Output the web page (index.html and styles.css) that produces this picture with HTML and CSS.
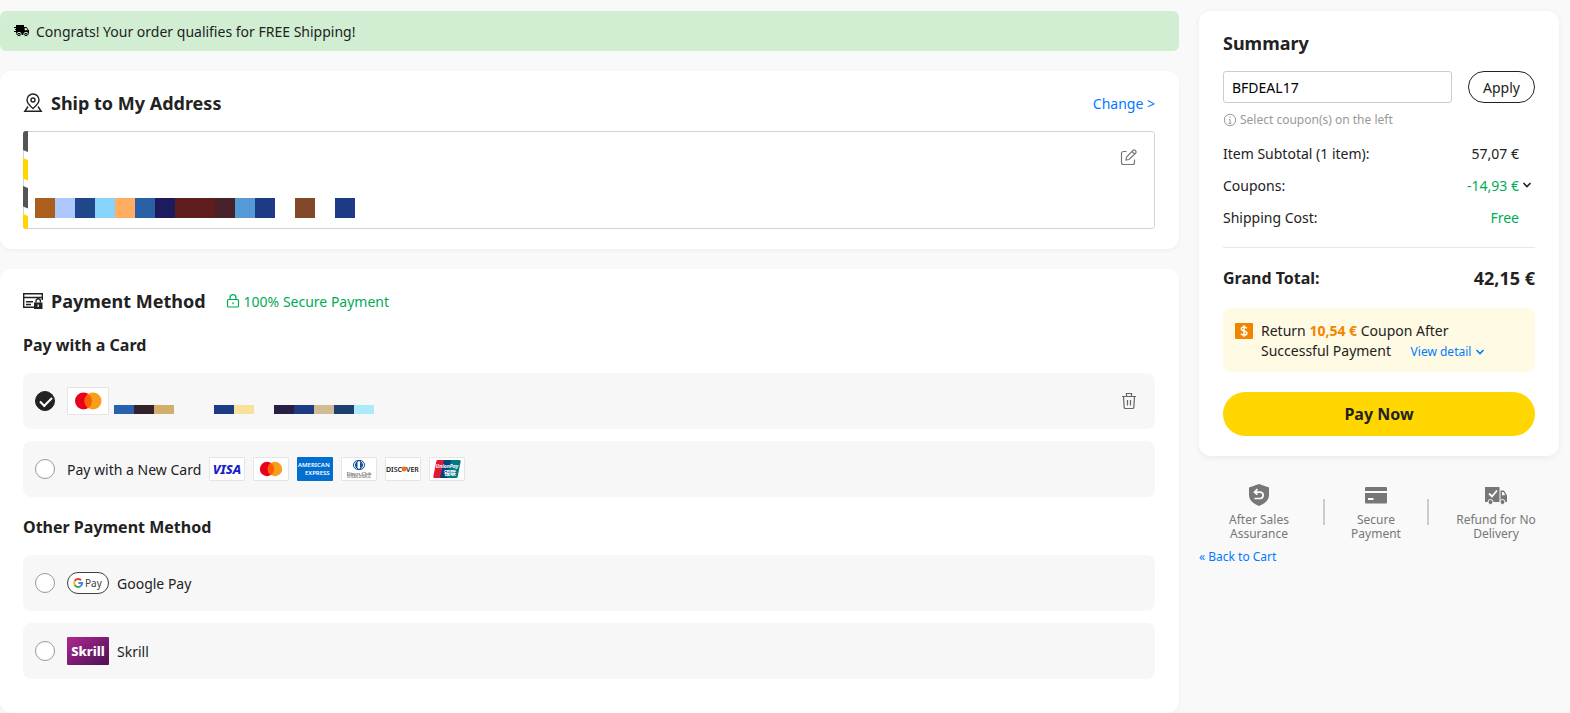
FILE: index.html
```html
<!DOCTYPE html>
<html lang="en">

<head>
    <meta charset="UTF-8">
    <meta name="viewport" content="width=device-width, initial-scale=1.0">
    <title>Checkout</title>
    <link rel="stylesheet" href="styles.css">
</head>

<body>
    <div class="checkout">
        <main class="main">
            <div class="banner">
                <svg width="16" height="14" viewBox="0 0 16 14" aria-hidden="true">
                    <path d="M2 1h8v10H2z M10 3h2.500L15 6.500V11h-5z" />
                    <path d="M10.700 4h1.600l1.500 2.200h-3.100z" fill="#d1eed3" />
                    <path d="M0 3.500h5M1 5.500h4M0 7.500h4" stroke="#000" />
                    <circle cx="5" cy="10.500" r="2.200" stroke="#d1eed3" />
                    <circle cx="12" cy="10.500" r="2.200" stroke="#d1eed3" />
                    <circle cx="5" cy="10.500" r=".7" fill="#d1eed3" />
                    <circle cx="12" cy="10.500" r=".7" fill="#d1eed3" />
                </svg>
                <span>Congrats! Your order qualifies for FREE Shipping!</span>
            </div>

            <section class="card">
                <div class="card-head">
                    <svg width="20" height="20" viewBox="0 0 20 20" fill="none" stroke="#222" stroke-width="1.4" aria-hidden="true">
                        <path d="M10 15.500C6.500 12.500 4 10 4 7a6 6 0 0 1 12 0c0 3-2.500 5.500-6 8.500z" />
                        <circle cx="10" cy="7" r="2" />
                        <path d="M5 13.500l-3.200 4.800h16.400L15 13.500" />
                    </svg>
                    <h2>Ship to My Address</h2>
                    <a class="change" href="#">Change &gt;</a>
                </div>
                <div class="address">
                    <svg class="stripes" width="5" height="98" viewBox="0 0 5 98" aria-hidden="true">
                        <path d="M0 0h5v21L0 19z M0 55l5 2v20.500l-5-2z" fill="#555" />
                        <path d="M0 27l5 2v20.500l-5-2z M0 83l5 2v13H0z" fill="#ffd600" />
                    </svg>
                    <svg class="address-blocks" width="320" height="20" viewBox="0 0 320 20" shape-rendering="crispEdges" aria-hidden="true">
                        <path d="M0 0h20v20H0z" fill="#ac5f1c" />
                        <path d="M20 0h20v20H20z" fill="#adc8ff" />
                        <path d="M40 0h20v20H40z" fill="#20468c" />
                        <path d="M60 0h20v20H60z" fill="#87d4ff" />
                        <path d="M80 0h20v20H80z" fill="#ffae61" />
                        <path d="M100 0h20v20h-20z" fill="#2b5fa6" />
                        <path d="M120 0h20v20h-20z" fill="#1d1a5e" />
                        <path d="M140 0h40v20h-40z" fill="#5f1d1d" />
                        <path d="M180 0h20v20h-20z" fill="#48202a" />
                        <path d="M200 0h20v20h-20z" fill="#569ad5" />
                        <path d="M220 0h20v20h-20z M300 0h20v20h-20z" fill="#1d3a85" />
                        <path d="M260 0h20v20h-20z" fill="#834828" />
                    </svg>
                    <button class="icon-btn edit" type="button" aria-label="Edit address">
                        <svg width="18" height="18" viewBox="0 0 18 18" fill="none" stroke="#777" stroke-width="1.200">
                            <path d="M6.500 3.500H3.500a2 2 0 0 0-2 2v9a2 2 0 0 0 2 2h9a2 2 0 0 0 2-2v-3" />
                            <path d="M6 12l.6-3L13 2.300a1.400 1.400 0 0 1 2 0l.7.7a1.400 1.400 0 0 1 0 2L9 11.500z M12 3.500l2.500 2.500" />
                        </svg>
                    </button>
                </div>
            </section>

            <section class="card payment">
                <div class="card-head">
                    <svg width="20" height="18" viewBox="0 0 20 18" aria-hidden="true">
                        <path d="M11 15.300H.7V1.700h18.600V8M.7 5.500h18.600M3 9.700h7M3 12.500h5" fill="none" stroke="#222" stroke-width="1.400" />
                        <path d="M11 10.500h8.500V17H11z" fill="#222" />
                        <path d="M13 10.500V9a2.200 2.200 0 0 1 4.400 0v1.500" fill="none" stroke="#222" stroke-width="1.400" />
                        <path d="M15.200 12.500v2.500" stroke="#fff" stroke-width="1.200" />
                    </svg>
                    <h2>Payment Method</h2>
                    <span class="secure">
                        <svg width="14" height="14" viewBox="0 0 14 14" fill="none" stroke="#00ab55" stroke-width="1.200" aria-hidden="true">
                            <rect x="1.500" y="5.500" width="11" height="7.500" rx="1" />
                            <path d="M4 5.500V3.700a3 3 0 0 1 6 0v1.800M7 8.300v2" />
                        </svg>
                        100% Secure Payment
                    </span>
                </div>

                <div class="group">
                    <h3>Pay with a Card</h3>
                    <div class="method saved">
                        <input type="radio" id="saved-card" name="method" aria-label="Saved Mastercard" checked>
                        <label class="method-label" for="saved-card">
                            <svg width="42" height="28" viewBox="0 0 42 28" aria-hidden="true">
                                <path d="M.5.5h41v27H.5z" fill="#fff" stroke="#e5e5e5" />
                                <circle cx="16.500" cy="14" r="8.500" fill="#eb001b" />
                                <circle cx="26" cy="14" r="8.500" fill="#f79e1b" />
                                <path d="M21.250 7a8.500 8.500 0 0 1 0 14a8.500 8.500 0 0 1 0-14z" fill="#ff5f00" />
                            </svg>
                            <svg class="card-blocks" width="260" height="9" viewBox="0 0 260 9" shape-rendering="crispEdges" aria-hidden="true">
                                <path d="M0 0h20v9H0z" fill="#2861ad" />
                                <path d="M20 0h20v9H20z" fill="#34222a" />
                                <path d="M40 0h20v9H40z" fill="#d2ae6d" />
                                <path d="M100 0h20v9h-20z M180 0h20v9h-20z" fill="#1d3a85" />
                                <path d="M120 0h20v9h-20z" fill="#f8e299" />
                                <path d="M160 0h20v9h-20z" fill="#291f45" />
                                <path d="M200 0h20v9h-20z" fill="#d0bd93" />
                                <path d="M220 0h20v9h-20z" fill="#1e4071" />
                                <path d="M240 0h20v9h-20z" fill="#abeaf8" />
                            </svg>
                        </label>
                        <button class="icon-btn" type="button" aria-label="Remove card">
                            <svg width="16" height="18" viewBox="0 0 16 18" fill="none" stroke="#666" stroke-width="1.200">
                                <path d="M1 4.500h14M5.500 4.500V1.500h5v3M2.500 4.500l.7 11.200a1 1 0 0 0 1 .8h7.600a1 1 0 0 0 1-.8l.7-11.200M6.500 8v5.500M9.500 8v5.500" />
                            </svg>
                        </button>
                    </div>
                    <div class="method">
                        <input type="radio" id="new-card" name="method">
                        <label class="method-label" for="new-card">
                            Pay with a New Card
                            <svg class="brand" width="36" height="24" viewBox="0 0 36 24" aria-hidden="true">
                                <path d="M.5.5h35v23H.5z" fill="#fff" stroke="#e5e5e5" />
                                <text x="18" y="17" text-anchor="middle" font-size="13" font-weight="800" font-style="italic" fill="#1a1fc8">VISA</text>
                            </svg>
                            <svg class="brand" width="36" height="24" viewBox="0 0 36 24" aria-hidden="true">
                                <path d="M.5.5h35v23H.5z" fill="#fff" stroke="#e5e5e5" />
                                <circle cx="14" cy="12" r="7.200" fill="#eb001b" />
                                <circle cx="22" cy="12" r="7.200" fill="#f79e1b" />
                                <path d="M18 6a7.200 7.200 0 0 1 0 12a7.200 7.200 0 0 1 0-12z" fill="#ff5f00" />
                            </svg>
                            <svg class="brand" width="36" height="24" viewBox="0 0 36 24" aria-hidden="true">
                                <rect width="36" height="24" rx="1" fill="#016fd0" />
                                <text x="1" y="10" font-size="6" font-weight="600" fill="#fff">AMERICAN</text>
                                <text x="8" y="18" font-size="6" font-weight="600" fill="#fff">EXPRESS</text>
                            </svg>
                            <svg class="brand" width="36" height="24" viewBox="0 0 36 24" aria-hidden="true">
                                <path d="M.5.5h35v23H.5z" fill="#fff" stroke="#e5e5e5" />
                                <circle cx="17" cy="8" r="4.500" fill="#fff" stroke="#0a4a97" />
                                <circle cx="19" cy="8" r="4.500" fill="none" stroke="#0a4a97" />
                                <path d="M16.500 4.800a3.500 3.500 0 0 0 0 6.400zM19 4.800a3.500 3.500 0 0 1 0 6.400z" fill="#0a4a97" />
                                <text class="serif" x="18" y="18" text-anchor="middle" font-size="5" fill="#222">Diners Club</text>
                                <text class="serif" x="18" y="21" text-anchor="middle" font-size="3" fill="#222">INTERNATIONAL</text>
                            </svg>
                            <svg class="brand" width="36" height="24" viewBox="0 0 36 24" aria-hidden="true">
                                <path d="M.5.5h35v23H.5z" fill="#fff" stroke="#e5e5e5" />
                                <text x="1" y="15" font-size="7" font-weight="600" fill="#222">DISC</text>
                                <circle cx="19" cy="12" r="2.500" fill="#f47216" />
                                <text x="21" y="15" font-size="7" font-weight="600" fill="#222">VER</text>
                            </svg>
                            <svg class="brand" width="36" height="24" viewBox="0 0 36 24" aria-hidden="true">
                                <path d="M.5.5h35v23H.5z" fill="#fff" stroke="#e5e5e5" />
                                <path d="M8.500 3h8l-4 18h-7q-1.500 0-1.200-1.500l3-15q.3-1.500 1.200-1.500z" fill="#e21836" />
                                <path d="M15 3h8l-4 18h-8z" fill="#00447c" />
                                <path d="M22 3h8.500q1.500 0 1.200 1.500l-3 15q-.3 1.500-1.500 1.500H18z" fill="#007b84" />
                                <text x="18" y="11" text-anchor="middle" font-size="5" font-weight="700" font-style="italic" fill="#fff">UnionPay</text>
                                <text class="cjk" x="21" y="18" text-anchor="middle" font-size="6" font-weight="700" fill="#fff">银联</text>
                            </svg>
                        </label>
                    </div>
                </div>

                <div class="group">
                    <h3>Other Payment Method</h3>
                    <div class="method">
                        <input type="radio" id="google-pay" name="method">
                        <label class="method-label" for="google-pay">
                            <svg width="42" height="22" viewBox="0 0 42 22" aria-hidden="true">
                                <rect x=".5" y=".5" width="41" height="21" rx="10.500" fill="#fff" stroke="#3c4043" />
                                <g fill="none" stroke-width="2">
                                    <path d="M14 8.200A4 4 0 0 0 7.700 9" stroke="#ea4335" />
                                    <path d="M7.700 9a4 4 0 0 0 0 4" stroke="#fbbc04" />
                                    <path d="M7.700 13a4 4 0 0 0 5.800 1.200" stroke="#34a853" />
                                    <path d="M13.500 14.200A4 4 0 0 0 15.200 11H11.300" stroke="#4285f4" />
                                </g>
                                <text x="18" y="15" font-size="10" fill="#3c4043">Pay</text>
                            </svg>
                            Google Pay
                        </label>
                    </div>
                    <div class="method">
                        <input type="radio" id="skrill" name="method">
                        <label class="method-label" for="skrill">
                            <svg width="42" height="28" viewBox="0 0 42 28" aria-hidden="true">
                                <linearGradient id="skrill-bg" x1="0" y1="0" x2="1" y2="1">
                                    <stop offset="0" stop-color="#ae2890" />
                                    <stop offset="1" stop-color="#4b1152" />
                                </linearGradient>
                                <rect width="42" height="28" rx="1" fill="url(#skrill-bg)" />
                                <text x="21" y="19" text-anchor="middle" font-size="13" font-weight="800" fill="#fff">Skrill</text>
                            </svg>
                            Skrill
                        </label>
                    </div>
                </div>
            </section>
        </main>

        <aside class="side">
            <section class="summary">
                <h2>Summary</h2>
                <form class="coupon">
                    <input type="text" aria-label="Coupon code" value="BFDEAL17">
                    <button type="button">Apply</button>
                </form>
                <p class="hint">
                    <svg width="14" height="14" viewBox="0 0 14 14" fill="none" stroke="#999" aria-hidden="true">
                        <circle cx="7" cy="7" r="5.700" />
                        <path d="M7 3.500v1.300M5.800 6.300H7v4M5.500 10.300h3" />
                    </svg>
                    Select coupon(s) on the left
                </p>
                <dl class="totals">
                    <div>
                        <dt>Item Subtotal (1 item):</dt>
                        <dd>57,07 €</dd>
                    </div>
                    <div>
                        <dt>Coupons:</dt>
                        <dd class="green">-14,93 €
                            <button class="toggle" type="button" aria-label="Show coupons">
                                <svg width="10" height="8" viewBox="0 0 10 8" fill="none" stroke="#222" stroke-width="1.600">
                                    <path d="M1.500 2L5 5.500 8.500 2" />
                                </svg>
                            </button>
                        </dd>
                    </div>
                    <div>
                        <dt>Shipping Cost:</dt>
                        <dd class="green">Free</dd>
                    </div>
                </dl>
                <div class="grand">
                    <span>Grand Total:</span>
                    <strong>42,15 €</strong>
                </div>
                <div class="return">
                    <svg width="18" height="16" viewBox="0 0 18 16" aria-hidden="true">
                        <rect width="18" height="16" rx="1" fill="#f28500" />
                        <path d="M11.800 5.300C11.300 4.400 10.300 4 9 4 7.400 4 6.300 4.700 6.300 5.900 6.300 8.500 11.900 7.300 11.900 10c0 1.300-1.200 2.100-2.900 2.100-1.500 0-2.500-.6-3-1.500M9 2.300v11.400" fill="none" stroke="#fff" stroke-width="1.500" />
                    </svg>
                    <p>Return <b>10,54 €</b> Coupon After Successful Payment
                        <a href="#">View detail
                            <svg width="10" height="8" viewBox="0 0 10 8" fill="none" stroke="#007aff" stroke-width="1.600" aria-hidden="true">
                                <path d="M1.500 2L5 5.500 8.500 2" />
                            </svg>
                        </a>
                    </p>
                </div>
                <button class="pay" type="button">Pay Now</button>
            </section>

            <div class="features">
                <div class="feature">
                    <svg width="24" height="24" viewBox="0 0 24 24" aria-hidden="true">
                        <path d="M12 1l10 3.500V12c0 5-4 8.500-10 11C6 20.500 2 17 2 12V4.500z" fill="#777" />
                        <path d="M8 9.200h5.500a3.200 3.200 0 0 1 0 6.300H7.500M10.500 6.200l-3 3 3 2.500" fill="none" stroke="#fff" stroke-width="1.700" />
                    </svg>
                    <span>After Sales<br>Assurance</span>
                </div>
                <i></i>
                <div class="feature">
                    <svg width="24" height="24" viewBox="0 0 24 24" aria-hidden="true">
                        <path d="M2 4h20a1 1 0 0 1 1 1v3H1V5a1 1 0 0 1 1-1z M1 10h22v9.500a1 1 0 0 1-1 1H2a1 1 0 0 1-1-1z" fill="#777" />
                        <path d="M4 15h5.500v2H4z" fill="#fff" />
                    </svg>
                    <span>Secure<br>Payment</span>
                </div>
                <i></i>
                <div class="feature">
                    <svg width="24" height="24" viewBox="0 0 24 24" aria-hidden="true">
                        <path d="M1 4h14.500v15H1z M16.500 7.500h3.500l3 5V19h-6.500z" fill="#777" />
                        <path d="M18 9h1.500l1.700 3.200H18z" fill="#f9f9f9" />
                        <circle cx="6.500" cy="19" r="2.500" fill="#777" stroke="#f9f9f9" />
                        <circle cx="18.500" cy="19" r="2.500" fill="#777" stroke="#f9f9f9" />
                        <path d="M5 10.500l3 3 5-6" fill="none" stroke="#fff" stroke-width="1.800" />
                    </svg>
                    <span>Refund for No<br>Delivery</span>
                </div>
            </div>
            <a class="back" href="#">« Back to Cart</a>
        </aside>
    </div>
</body>

</html>
```
FILE: styles.css
```css
* {
    margin: 0;
    padding: 0;
    box-sizing: border-box;
}

body {
    background: #f9f9f9;
    color: #222;
    font: 14px/21px "Noto Sans", "Noto Sans CJK SC", sans-serif;
}

button,
input {
    font: inherit;
    color: inherit;
}

button {
    cursor: pointer;
}

svg {
    display: block;
    flex: none;
}

a {
    color: #007aff;
    text-decoration: none;
}

h2 {
    font-size: 18px;
    line-height: 24px;
    font-weight: 700;
}

h3 {
    font-size: 16px;
    line-height: 24px;
    font-weight: 700;
    margin-bottom: 16px;
}

.checkout {
    display: grid;
    grid-template-columns: minmax(0, 1fr) 360px;
    gap: 20px;
    padding: 11px 11px 0 0;
}

.main {
    display: flex;
    flex-direction: column;
    gap: 20px;
}

.banner {
    display: flex;
    align-items: center;
    gap: 6px;
    height: 40px;
    padding: 0 14px;
    border-radius: 6px;
    background: #d1eed3;
}

.card {
    padding: 20px 24px 20px 23px;
    border-radius: 12px;
    background: #fff;
    box-shadow: 0 2px 4px rgba(0, 0, 0, .04);
}

.payment {
    padding-bottom: 34px;
}

.card-head {
    display: flex;
    align-items: center;
    gap: 8px;
}

.change {
    margin-left: auto;
}

.secure {
    display: flex;
    align-items: center;
    gap: 4px;
    margin-left: 12px;
    color: #00ab55;
}

/* address */
.address {
    position: relative;
    display: flex;
    justify-content: space-between;
    align-items: flex-start;
    height: 98px;
    margin-top: 16px;
    padding: 16px 16px 10px 11px;
    border: 1px solid #d3d3d3;
    border-radius: 3px;
}

.stripes {
    position: absolute;
    left: -1px;
    top: -1px;
    border-radius: 3px 0 0 3px;
}

.address-blocks {
    align-self: flex-end;
}

.icon-btn {
    display: flex;
    border: 0;
    background: none;
}

/* payment methods */
.group {
    margin-top: 20px;
}

.group + .group {
    margin-top: 18px;
}

.method {
    display: flex;
    align-items: center;
    gap: 12px;
    height: 56px;
    padding: 0 18px 0 12px;
    border-radius: 8px;
    background: #f7f7f7;
}

.method + .method {
    margin-top: 12px;
}

.method input {
    position: relative;
    appearance: none;
    width: 20px;
    height: 20px;
    border: 1px solid #999;
    border-radius: 50%;
    background: #fff;
}

.method input:checked {
    border-color: #222;
    background: #222;
}

.method input:checked::after {
    content: "";
    position: absolute;
    left: 4px;
    top: 5px;
    width: 10px;
    height: 5px;
    border: solid #fff;
    border-width: 0 0 2px 2px;
    transform: rotate(-45deg);
}

.method-label {
    display: flex;
    flex: 1;
    align-items: center;
    gap: 8px;
}

.saved .method-label {
    gap: 5px;
}

.card-blocks {
    align-self: flex-end;
    margin-bottom: 1px;
}

.serif {
    font-family: "Liberation Serif", serif;
}

.cjk {
    font-family: "Noto Sans CJK SC", sans-serif;
}

/* summary */
.summary {
    padding: 20px 24px;
    border-radius: 12px;
    background: #fff;
    box-shadow: 0 2px 6px rgba(0, 0, 0, .06);
}

.coupon {
    display: flex;
    gap: 16px;
    margin-top: 16px;
}

.coupon input {
    flex: 1;
    min-width: 0;
    height: 32px;
    padding: 0 8px;
    border: 1px solid #ccc;
    border-radius: 3px;
    color: #000;
}

.coupon button {
    width: 67px;
    border: 1px solid #222;
    border-radius: 16px;
    background: #fff;
}

.hint {
    display: flex;
    align-items: center;
    gap: 3px;
    margin: 6px 0 8px;
    color: #999;
    font-size: 12px;
}

.totals {
    padding-bottom: 13px;
    border-bottom: 1px solid #e8e8e8;
    line-height: 20px;
}

.totals div {
    display: flex;
    justify-content: space-between;
    padding: 6px 16px 6px 0;
}

.totals dd {
    position: relative;
}

.green {
    color: #00ab55;
}

.toggle {
    position: absolute;
    right: -13px;
    top: 5px;
    border: 0;
    background: none;
}

.grand {
    display: flex;
    justify-content: space-between;
    align-items: center;
    height: 60px;
    font-size: 16px;
    font-weight: 700;
}

.grand strong {
    font-size: 18px;
    font-weight: 700;
}

.return {
    display: flex;
    gap: 8px;
    padding: 13px 12px 11px;
    border-radius: 8px;
    background: #fffae3;
    line-height: 20px;
}

.return > svg {
    margin-top: 2px;
}

.return p {
    max-width: 240px;
}

.return b {
    color: #f28500;
    font-weight: 700;
}

.return a {
    margin-left: 16px;
    font-size: 12px;
    line-height: 16px;
}

.return a svg {
    display: inline-block;
}

.pay {
    width: 100%;
    height: 44px;
    margin-top: 20px;
    border: 0;
    border-radius: 22px;
    background: #ffd600;
    font-size: 16px;
    font-weight: 700;
}

/* features */
.features {
    display: grid;
    grid-template-columns: 120px 2px 94px 2px 1fr;
    gap: 4px;
    align-items: center;
    margin-top: 27px;
    color: #777;
    font-size: 12px;
    line-height: 14px;
    text-align: center;
}

.features i {
    height: 26px;
    background: #ccc;
}

.feature svg {
    margin: 0 auto 6px;
}

.back {
    display: inline-block;
    margin-top: 5px;
    font-size: 12px;
}
```
